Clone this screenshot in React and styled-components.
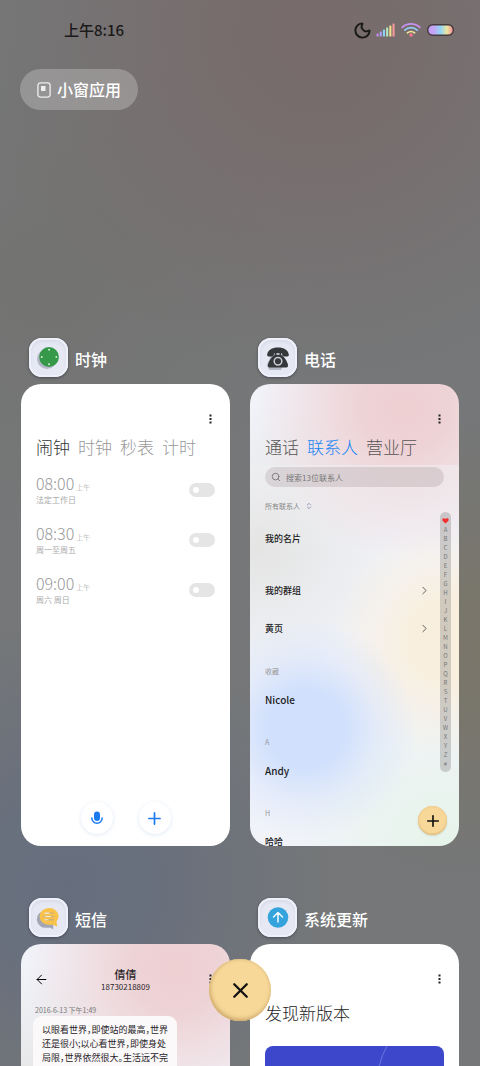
import styled, { createGlobalStyle, css } from 'styled-components';
import { Moon, Search, Plus, X, ArrowLeft, ChevronRight, ChevronsUpDown } from 'lucide-react';

const alarms = [
  { id: 'a1', time: '08:00', note: '法定工作日' },
  { id: 'a2', time: '08:30', note: '周一至周五' },
  { id: 'a3', time: '09:00', note: '周六 周日' },
];

const contacts = [
  { group: '收藏', name: 'Nicole', latin: true },
  { group: 'A', name: 'Andy', latin: true },
  { group: 'H', name: '哈哈' },
];

const letters = 'ABCDEFGHIJKLMNOPQRSTUVWXYZ#'.split('');

const signalBars = [
  { h: 3, color: '#c58cf0' },
  { h: 5, color: '#a9a4f5' },
  { h: 7, color: '#8fd0f5' },
  { h: 9, color: '#b5e8c0' },
  { h: 11, color: '#f2e08c' },
  { h: 13, color: '#f59a9a' },
];

function StatusIcons() {
  return (
    <Icons>
      <Moon size={19} strokeWidth={2.4} color="#191919" />
      <svg width="19" height="14" viewBox="0 0 19 14">
        {signalBars.map((bar, i) => (
          <rect key={bar.h} x={0.5 + i * 3.2} y={13.5 - bar.h} width="2.1" height={bar.h} rx="0.6" fill={bar.color} />
        ))}
      </svg>
      <svg className="wifi" width="20" height="14" viewBox="0 0 20 14" fill="none" strokeWidth="1.7" strokeLinecap="round">
        <path d="M1.2 4.400a13 13 0 0 1 17.600 0" stroke="#c792f2" />
        <path d="M3.800 7.200a9 9 0 0 1 12.400 0" stroke="#93cdf6" />
        <path d="M6.400 9.900a5.400 5.400 0 0 1 7.200 0" stroke="#eee59a" />
        <circle cx="10" cy="12" r="1.8" fill="#f2788c" />
      </svg>
      <svg width="27" height="12" viewBox="0 0 27 12">
        <defs>
          <linearGradient id="battery">
            <stop offset="0" stopColor="#c49af5" />
            <stop offset="0.25" stopColor="#c5a5f5" />
            <stop offset="0.5" stopColor="#92d6f6" />
            <stop offset="0.75" stopColor="#ece6a0" />
            <stop offset="1" stopColor="#f68a98" />
          </linearGradient>
        </defs>
        <rect x="0.7" y="0.7" width="25.6" height="10.6" rx="5" fill="url(#battery)" stroke="#443b3c" strokeWidth="1.4" />
      </svg>
    </Icons>
  );
}

function MoreButton() {
  return (
    <More type="button" aria-label="更多">
      <svg width="3" height="10" viewBox="0 0 3 10" fill="#222">
        <rect x="0.5" y="0.5" width="2" height="2" />
        <rect x="0.5" y="4" width="2" height="2" />
        <rect x="0.5" y="7.5" width="2" height="2" />
      </svg>
    </More>
  );
}

function ClockIcon() {
  return (
    <svg width="25" height="25" viewBox="0 0 24 24">
      <circle cx="10.5" cy="13.5" r="9.500" fill="#b4b7c8" />
      <circle cx="12.5" cy="11.500" r="9.500" fill="#36994a" />
      <g fill="#d5f0d8">
        <circle cx="12.5" cy="4.500" r="0.9" />
        <circle cx="12.5" cy="18.500" r="0.9" />
        <circle cx="5.500" cy="11.500" r="0.9" />
        <circle cx="19.500" cy="11.500" r="0.9" />
      </g>
    </svg>
  );
}

function PhoneIcon() {
  return (
    <svg width="26" height="26" viewBox="0 0 24 24">
      <path d="M1.500 19 5 11l-3-2 6-2 9 10-2 6H4z" fill="#b4b7c6" />
      <g fill="#35373a">
        <path d="M2 9.200C2.300 4.600 6.500 2.200 12 2.200s9.700 2.400 10 7c0 1-.5 1.300-1.400 1.300h-3.200c-1 0-1.400-.4-1.500-1.400L15.700 7.600H8.300L8.100 9.100c-.1 1-.5 1.400-1.500 1.400H3.400C2.500 10.500 2 10.200 2 9.200z" />
        <path d="M9 6.500h1.600V9h2.800V6.500H15v2.800c2.600 1.500 5.600 5.600 6.200 9 .2 1.500-.2 2.500-1.500 2.500H4.300c-1.300 0-1.700-1-1.500-2.500.6-3.400 3.600-7.500 6.200-9z" />
      </g>
      <circle cx="12" cy="15" r="3.500" fill="none" stroke="#c9cbd2" strokeWidth="1.400" />
    </svg>
  );
}

function MessageIcon() {
  return (
    <svg width="25" height="25" viewBox="0 0 24 24">
      <path d="M9.500 5.500a8.500 8.200 0 1 0 1 16.300h3.500l2.500 1.700v-9z" fill="#a3a6b4" />
      <path d="M12.500 2.800a9.300 8.100 0 1 0 .5 16.200h3.500l2.700 1.500c.9.300 1.200-.2 1-1l-.5-3.700A9.300 8.100 0 0 0 12.500 2.800z" fill="#f9c34b" />
      <path d="M9.500 7.800h7M7 11h9.500M9.500 14.200h7" stroke="#cfae7c" strokeWidth="1.300" strokeLinecap="round" />
      <path d="M8.500 7.800h4M9 11h5M8.500 14.200h3" stroke="#f3ead2" strokeWidth="1.100" strokeLinecap="round" />
    </svg>
  );
}

function UpdateIcon() {
  return (
    <svg width="24" height="24" viewBox="0 0 24 24">
      <circle cx="12" cy="11.500" r="10.300" fill="#35a3dc" />
      <path d="M12 16V6.800M7.500 11 12 6.500l4.500 4.500" fill="none" stroke="#f3fbff" strokeWidth="1.500" strokeLinecap="round" strokeLinejoin="round" />
    </svg>
  );
}

function Task({ icon, title, children, tone }) {
  return (
    <TaskWrap>
      <TaskHeader>
        <AppIcon>{icon}</AppIcon>
        <TaskTitle>{title}</TaskTitle>
      </TaskHeader>
      <Card $tone={tone}>{children}</Card>
    </TaskWrap>
  );
}

function ClockCard() {
  return (
    <>
      <CardTop><MoreButton /></CardTop>
      <Tabs>
        <Tab type="button" $color="#333">闹钟</Tab>
        <Tab type="button" $color="#999">时钟</Tab>
        <Tab type="button" $color="#999">秒表</Tab>
        <Tab type="button" $color="#999">计时</Tab>
      </Tabs>
      <AlarmList>
        {alarms.map((alarm) => (
          <AlarmRow key={alarm.id}>
            <label htmlFor={alarm.id}>
              <div className="time">{alarm.time}<span>上午</span></div>
              <div className="note">{alarm.note}</div>
            </label>
            <Toggle id={alarm.id} type="checkbox" />
          </AlarmRow>
        ))}
      </AlarmList>
      <ClockActions>
        <RoundButton type="button" aria-label="语音">
          <svg width="14" height="14" viewBox="0 0 14 14">
            <rect x="4" y="0.500" width="6" height="9.500" rx="3" fill="#1c7bf0" />
            <path d="M1.800 7a5.200 5.200 0 0 0 10.400 0" fill="none" stroke="#1c7bf0" strokeWidth="1.500" strokeLinecap="round" />
          </svg>
        </RoundButton>
        <RoundButton type="button" aria-label="添加闹钟">
          <Plus size={19} strokeWidth={2.2} color="#1c7bf0" />
        </RoundButton>
      </ClockActions>
    </>
  );
}

function PhoneCard() {
  return (
    <>
      <CardTop><MoreButton /></CardTop>
      <Tabs>
        <Tab type="button" $color="#555">通话</Tab>
        <Tab type="button" $color="#1583f5">联系人</Tab>
        <Tab type="button" $color="#555">营业厅</Tab>
      </Tabs>
      <ContactPane>
        <SearchBox>
          <Search size={10} strokeWidth={2.2} color="#777" />
          <input type="text" placeholder="搜索13位联系人" aria-label="搜索联系人" />
        </SearchBox>
        <SortButton type="button">
          所有联系人
          <ChevronsUpDown size={8} strokeWidth={2.4} color="#7f88ad" />
        </SortButton>
        <Entry $spaced>我的名片</Entry>
        <Entry>我的群组<ChevronRight size={13} strokeWidth={1.7} color="#555" /></Entry>
        <Entry>黄页<ChevronRight size={13} strokeWidth={1.7} color="#555" /></Entry>
        {contacts.map((c) => (
          <div key={c.name}>
            <GroupLabel>{c.group}</GroupLabel>
            <Entry $latin={c.latin}>{c.name}</Entry>
          </div>
        ))}
      </ContactPane>
      <IndexBar>
        <svg width="7" height="9" viewBox="0 0 7 9">
          <path d="M3.500 7.600 1 5.300C-.4 3.800.5 2.200 1.800 2.200c.8 0 1.300.3 1.700.9.400-.6.900-.9 1.700-.9 1.300 0 2.200 1.600.8 3.100z" fill="#f22f2f" />
        </svg>
        {letters.map((l) => <span key={l}>{l}</span>)}
      </IndexBar>
      <AddButton type="button" aria-label="添加联系人"><Plus size={18} strokeWidth={2.2} /></AddButton>
    </>
  );
}

function MessageCard() {
  return (
    <>
      <MessageTop>
        <BackButton type="button" aria-label="返回"><ArrowLeft size={15} strokeWidth={1.6} /></BackButton>
        <div className="who">
          <div className="name">倩倩</div>
          <div className="number">18730218809</div>
        </div>
        <MoreButton />
      </MessageTop>
      <MessageDate>2016-6-13 下午1:49</MessageDate>
      <Bubble>
        以眼看世界，即使站的最高，世界<br />
        还是很小;以心看世界，即使身处<br />
        局限，世界依然很大。生活远不完
      </Bubble>
    </>
  );
}

function UpdateCard() {
  return (
    <>
      <CardTop><MoreButton /></CardTop>
      <UpdateTitle>发现新版本</UpdateTitle>
      <Banner>
        <svg width="80" height="80" viewBox="0 0 80 80" fill="none" stroke="#626bdb" strokeWidth="1.200">
          <path d="M23 0A70 70 0 0 0 14 40" />
        </svg>
      </Banner>
    </>
  );
}

function App() {
  return (
    <Screen>
      <GlobalStyle />
      <StatusBar>
        <span>上午8:16</span>
        <StatusIcons />
      </StatusBar>
      <SmallWindow type="button">
        <svg width="14" height="16" viewBox="0 0 14 16">
          <rect x="0.900" y="0.900" width="12.200" height="14.200" rx="2.500" fill="none" stroke="#eee" strokeWidth="1.300" />
          <rect x="4" y="4" width="4.500" height="5" fill="#eee" />
        </svg>
        <span>小窗应用</span>
      </SmallWindow>
      <TaskGrid>
        <Task icon={<ClockIcon />} title="时钟"><ClockCard /></Task>
        <Task icon={<PhoneIcon />} title="电话" tone="contacts"><PhoneCard /></Task>
        <Task icon={<MessageIcon />} title="短信" tone="message"><MessageCard /></Task>
        <Task icon={<UpdateIcon />} title="系统更新"><UpdateCard /></Task>
      </TaskGrid>
      <CloseButton type="button" aria-label="全部清除"><X size={25} strokeWidth={2.2} /></CloseButton>
    </Screen>
  );
}

export default App;

const GlobalStyle = createGlobalStyle`
  * {
    box-sizing: border-box;
  }
  body {
    margin: 0;
    font-family: 'Noto Sans CJK SC', 'Noto Sans', sans-serif;
  }
  button {
    border: 0;
    padding: 0;
    background: none;
    font-family: inherit;
    cursor: pointer;
  }
  svg {
    display: block;
    flex-shrink: 0;
  }
`;

const Screen = styled.div`
  position: relative;
  height: 100vh;
  overflow: hidden;
  background:
    radial-gradient(circle at 66% 3%, #786b6b 0%, rgba(120, 107, 107, 0.8) 10%, rgba(120, 107, 107, 0) 32%),
    radial-gradient(circle at 14% 83%, #666e7e 0%, rgba(102, 110, 126, 0.8) 9%, rgba(102, 110, 126, 0) 27%),
    radial-gradient(circle at 100% 61%, #7a766a 0%, rgba(122, 118, 106, 0.8) 9%, rgba(122, 118, 106, 0) 28%),
    radial-gradient(circle at 10% 26%, rgba(114, 114, 111, 0.8) 0%, rgba(114, 114, 111, 0) 28%),
    #757778;
`;

const StatusBar = styled.header`
  display: flex;
  align-items: center;
  justify-content: space-between;
  height: 60px;
  padding: 0 26px 0 64px;
  font-size: 15px;
  font-weight: 500;
  color: #1c1a1a;

  > span {
    padding-bottom: 2px;
  }
`;

const Icons = styled.div`
  display: flex;
  align-items: center;
  gap: 4px;

  .wifi {
    margin: 0 2px;
  }
`;

const SmallWindow = styled.button`
  display: flex;
  align-items: center;
  gap: 6px;
  height: 41px;
  margin: 9px 0 0 20px;
  padding: 0 17px;
  border-radius: 21px;
  background: rgba(255, 255, 255, 0.24);
  color: #fff;
  font-size: 16px;
  font-weight: 500;

  span {
    padding-bottom: 2px;
  }
`;

const TaskGrid = styled.main`
  display: grid;
  grid-template-columns: 1fr 1fr;
  gap: 52px 20px;
  padding: 228px 21px 0;
`;

const TaskWrap = styled.section`
  min-width: 0;
`;

const TaskHeader = styled.div`
  display: flex;
  align-items: flex-end;
  gap: 7px;
  height: 46px;
  padding: 0 0 7px 8px;
`;

const AppIcon = styled.div`
  display: flex;
  align-items: center;
  justify-content: center;
  width: 39px;
  height: 39px;
  border-radius: 13px;
  background: #e6e8f4;
  box-shadow: inset 0 0 0 2px #eef0fa, inset 0 2px 3px 2px #d8dae8, 0 1px 3px rgba(30, 30, 45, 0.5);
`;

const TaskTitle = styled.h2`
  margin: 0;
  color: #fff;
  font-size: 16px;
  font-weight: 500;
  line-height: 36px;
`;

const tones = {
  contacts: css`
    background:
      radial-gradient(circle 150px at 155px 24px, #eecfd2 0%, #eed3d6 30%, rgba(238, 211, 214, 0) 100%),
      radial-gradient(circle 110px at 56px 345px, #d1e0fc 0%, #d1e0fc 35%, rgba(209, 224, 252, 0.4) 65%, rgba(209, 224, 252, 0) 100%),
      radial-gradient(circle 120px at 200px 256px, #f9efde 0%, #f9efde 30%, rgba(249, 239, 222, 0) 100%),
      radial-gradient(circle 150px at 190px 462px, #e6f4ea 0%, rgba(230, 244, 234, 0) 100%),
      radial-gradient(circle 140px at 10px 160px, #e4e4e3 0%, rgba(228, 228, 227, 0) 100%),
      #f1f3f9;
  `,
  message: css`
    background:
      radial-gradient(circle 150px at 155px 24px, #eecfd2 0%, #eed3d6 30%, rgba(238, 211, 214, 0) 100%),
      radial-gradient(circle 140px at 10px 160px, #e4e4e3 0%, rgba(228, 228, 227, 0) 100%),
      #f1f3f9;
  `,
};

const Card = styled.div`
  position: relative;
  display: flex;
  flex-direction: column;
  aspect-ratio: 209 / 462;
  overflow: hidden;
  border-radius: 20px;
  background: #fff;
  ${(props) => tones[props.$tone]}
`;

const CardTop = styled.div`
  display: flex;
  justify-content: flex-end;
  align-items: flex-start;
  flex-shrink: 0;
  height: 51px;
  padding: 30px 18px 0 16px;
`;

const More = styled.button`
  width: 3px;
  height: 10px;
`;

const Tabs = styled.nav`
  display: flex;
  flex-shrink: 0;
  gap: 8px;
  padding: 0 15px;
`;

const Tab = styled.button`
  color: ${(props) => props.$color};
  font-size: 17px;
  font-weight: 300;
  line-height: 24px;
  white-space: nowrap;
`;

const AlarmList = styled.div`
  padding: 6px 15px 0;
`;

const AlarmRow = styled.div`
  display: flex;
  align-items: center;
  justify-content: space-between;
  height: 50px;
  color: #999;

  .time {
    font-size: 16px;
    font-weight: 300;
    line-height: 16px;
  }
  .time span {
    margin-left: 2px;
    font-size: 7px;
  }
  .note {
    font-size: 8px;
    line-height: 10px;
    color: #aaa;
  }
`;

const Toggle = styled.input`
  appearance: none;
  width: 26px;
  height: 14px;
  margin: 0;
  padding: 4px;
  border-radius: 7px;
  background: #e5e5e5;

  &::before {
    content: '';
    display: block;
    width: 6px;
    height: 6px;
    border-radius: 50%;
    background: #fff;
  }
  &:checked {
    background: #1c7bf0;
  }
  &:checked::before {
    margin-left: auto;
  }
`;

const ClockActions = styled.div`
  display: flex;
  justify-content: center;
  gap: 26px;
  margin-top: auto;
  padding-bottom: 12px;
`;

const RoundButton = styled.button`
  display: flex;
  align-items: center;
  justify-content: center;
  width: 32px;
  height: 32px;
  border-radius: 50%;
  background: #fff;
  box-shadow: 0 1px 4px rgba(60, 120, 190, 0.16);
`;

const ContactPane = styled.div`
  flex: 1;
  margin-top: 6px;
  padding: 2px 15px 0;
  background: linear-gradient(rgba(240, 240, 242, 0.5), rgba(240, 240, 244, 0) 90px);
`;

const SearchBox = styled.label`
  display: flex;
  align-items: center;
  gap: 5px;
  height: 20px;
  padding: 0 6px;
  border-radius: 10px;
  background: rgba(120, 100, 105, 0.18);

  input {
    flex: 1;
    min-width: 0;
    padding: 0;
    border: 0;
    outline: 0;
    background: none;
    font-family: inherit;
    font-size: 8px;
  }
  input::placeholder {
    color: #777;
  }
`;

const SortButton = styled.button`
  display: flex;
  align-items: center;
  gap: 5px;
  height: 20px;
  margin: 9px 0 3px;
  font-size: 7px;
  color: #888;
`;

const Entry = styled.div`
  display: flex;
  align-items: center;
  justify-content: space-between;
  height: 38px;
  margin-bottom: ${(props) => (props.$spaced ? '14px' : '0')};
  padding-right: 13px;
  color: #1b1b1d;
  font-size: ${(props) => (props.$latin ? '10px' : '9px')};
  font-weight: 500;
`;

const GroupLabel = styled.div`
  margin-top: 15px;
  color: #999;
  font-size: 7px;
  line-height: 18px;
`;

const IndexBar = styled.nav`
  position: absolute;
  top: 128px;
  right: 8px;
  display: flex;
  flex-direction: column;
  align-items: center;
  width: 11px;
  padding: 4px 0;
  border-radius: 6px;
  background: rgba(120, 120, 120, 0.32);
  color: #777;
  font-size: 6px;
  line-height: 9px;
`;

const raised = css`
  display: flex;
  align-items: center;
  justify-content: center;
  border-radius: 50%;
  background: #f7d899;
  color: #111;
`;

const AddButton = styled.button`
  ${raised}
  position: absolute;
  right: 12px;
  bottom: 11px;
  width: 29px;
  height: 29px;
  box-shadow: inset 0 -1px 2px #d9b67a, inset 0 1px 2px #f3cf90, 0 1px 2px rgba(120, 100, 60, 0.2);
`;

const CloseButton = styled.button`
  ${raised}
  position: fixed;
  left: 50%;
  bottom: 45px;
  width: 62px;
  height: 62px;
  margin-left: -31px;
  box-shadow: inset 1px -2px 4px #cba669, inset 0 1px 3px #e9c98d;
`;

const MessageTop = styled.div`
  display: grid;
  grid-template-columns: 1fr auto 1fr;
  align-items: start;
  padding: 23px 18px 0;

  .who {
    text-align: center;
    color: #2a2628;
  }
  .name {
    font-size: 11px;
    font-weight: 500;
    line-height: 14px;
  }
  .number {
    font-size: 8px;
    line-height: 12px;
  }
  ${More} {
    margin-top: 7px;
    justify-self: end;
  }
`;

const BackButton = styled.button`
  width: 15px;
  height: 15px;
  margin: 5px 0 0 -5px;
`;

const MessageDate = styled.div`
  margin-top: 11px;
  padding: 0 14px;
  color: #777;
  font-size: 7px;
  line-height: 12px;
`;

const Bubble = styled.p`
  flex: 1;
  align-self: flex-start;
  margin: 0 0 20px 12px;
  padding: 7px 9px;
  border-radius: 9px;
  background: #fcf9fb;
  color: #262326;
  font-size: 9px;
  line-height: 14px;
  font-feature-settings: 'halt';
  white-space: nowrap;
`;

const UpdateTitle = styled.h3`
  margin: 0;
  padding: 6px 15px 0;
  color: #222;
  font-size: 17px;
  font-weight: 300;
  line-height: 24px;
`;

const Banner = styled.div`
  display: flex;
  justify-content: flex-end;
  height: 200px;
  margin: 21px 15px 0;
  border-radius: 8px;
  background: #3d47cc;
`;
